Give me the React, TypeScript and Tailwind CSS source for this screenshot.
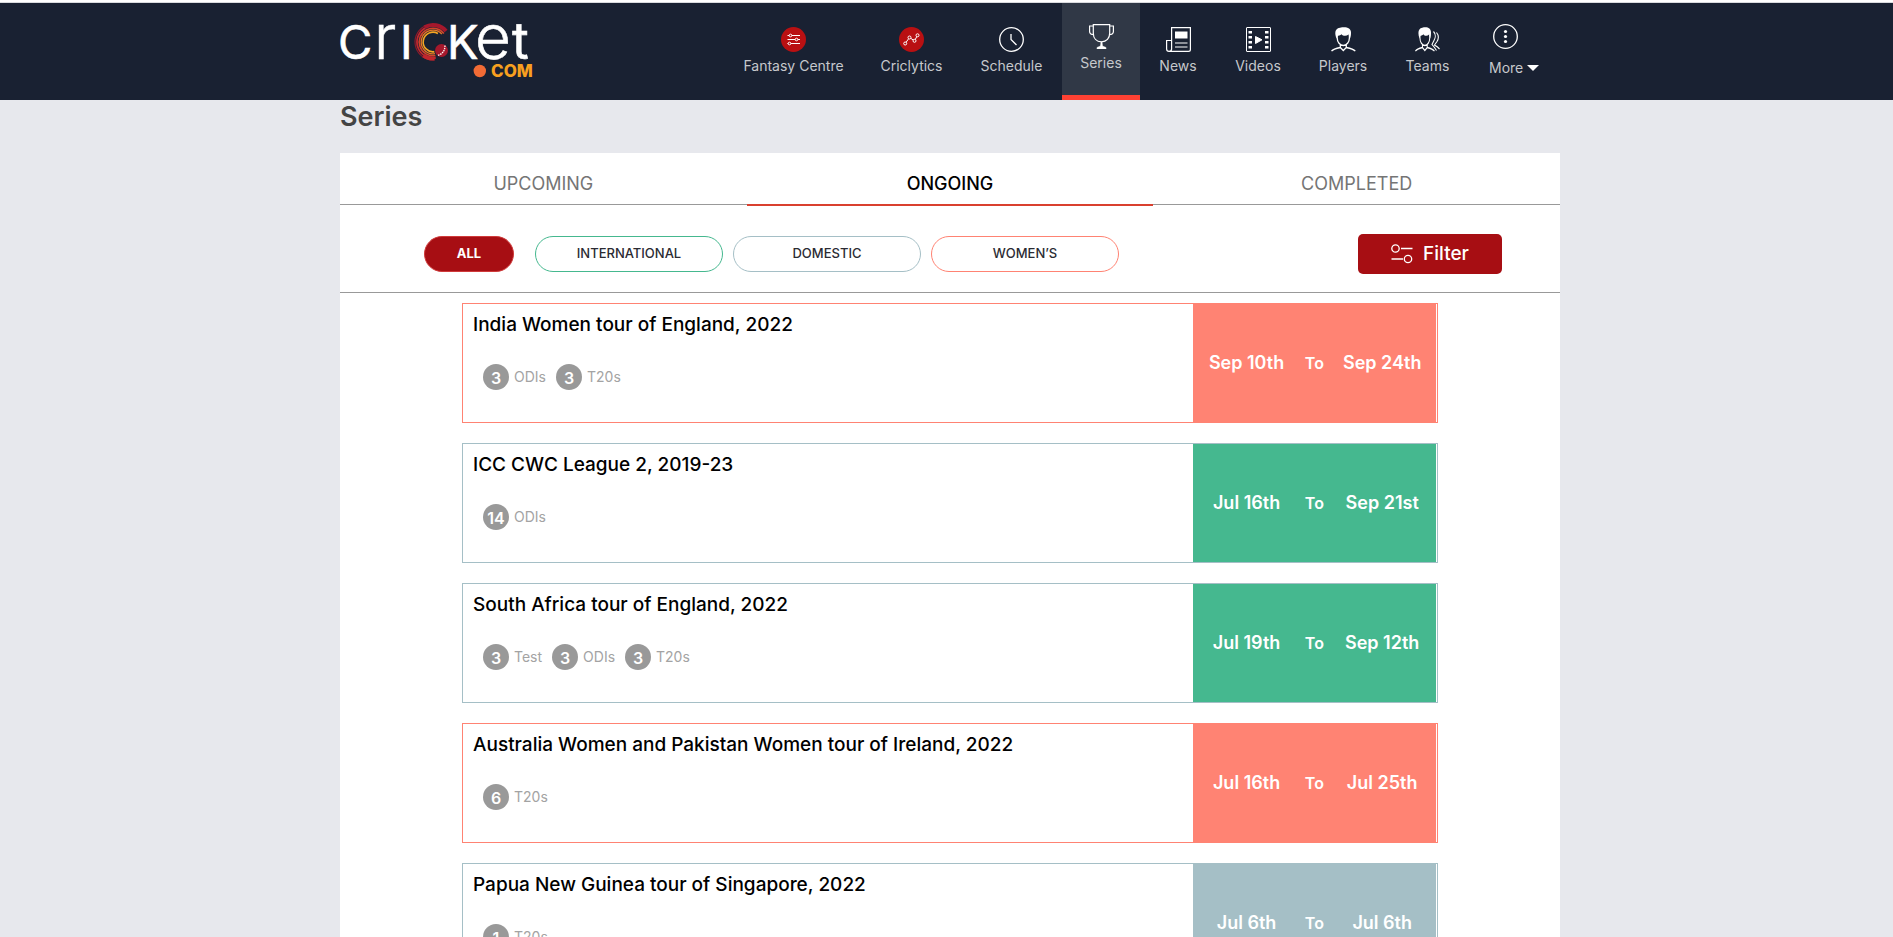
import React from "react";

type IconProps = { className?: string };

function FantasyIcon({ className }: IconProps) {
  return (
    <svg viewBox="0 0 25 25" className={className} aria-hidden="true">
      <circle cx="12.5" cy="12.5" r="12.5" fill="#b91012" />
      <g stroke="#fff" strokeWidth="1" fill="#b91012">
        <path d="M6.5 8.5H19M6.5 12.5H19M6.5 16.5H19" />
        <circle cx="9.5" cy="8.5" r="1.3" />
        <circle cx="15.5" cy="12.5" r="1.3" />
        <circle cx="8.5" cy="16.5" r="1.3" />
      </g>
    </svg>
  );
}

function CriclyticsIcon({ className }: IconProps) {
  return (
    <svg viewBox="0 0 25 25" className={className} aria-hidden="true">
      <circle cx="12.5" cy="12.5" r="12.5" fill="#b91012" />
      <g stroke="#fff" strokeWidth="1" fill="#b91012">
        <path d="M6.2 16.5L10.5 10.5L15.5 13.8L18.5 8.3" fill="none" />
        <circle cx="6.2" cy="16.5" r="1.5" />
        <circle cx="10.5" cy="10.5" r="1.5" />
        <circle cx="15.5" cy="13.8" r="1.5" />
        <circle cx="18.5" cy="8.3" r="1.5" />
      </g>
    </svg>
  );
}

function ClockIcon({ className }: IconProps) {
  return (
    <svg viewBox="0 0 25 25" className={className} fill="none" stroke="#fff" strokeWidth="1.3" aria-hidden="true">
      <circle cx="12.5" cy="12.5" r="11.8" />
      <path d="M12 7V12.5L17.5 18" />
    </svg>
  );
}

function TrophyIcon({ className }: IconProps) {
  return (
    <svg viewBox="0 0 25 25" className={className} fill="none" stroke="#fff" strokeWidth="1.2" aria-hidden="true">
      <path d="M4.3 0.6H20.7V9C20.7 14.5 17.5 17.8 12.5 17.8S4.3 14.5 4.3 9Z" />
      <path d="M4.3 2H0.6V7.5C0.6 9.5 2 10.6 4.7 10.6M20.7 2H24.4V7.5C24.4 9.5 23 10.6 20.3 10.6" />
      <path d="M12 18H13L13.5 22L17 23.5V25H8V23.5L11.5 22Z" fill="#fff" strokeWidth="0.5" />
    </svg>
  );
}

function NewsIcon({ className }: IconProps) {
  return (
    <svg viewBox="0 0 25 25" className={className} fill="none" stroke="#fff" strokeWidth="1.2" aria-hidden="true">
      <path d="M5.6 22V0.6H24.4V22.5Q24.4 24.4 22.5 24.4H3Q0.6 24.4 0.6 22V13.5H5.6V22Q5.6 24.4 3 24.4" />
      <path d="M9 4.5H21.5V11.5H9Z" fill="#fff" stroke="none" />
      <path d="M9 16H21.5M9 20H21.5" />
    </svg>
  );
}

function VideoIcon({ className }: IconProps) {
  return (
    <svg viewBox="0 0 25 25" className={className} aria-hidden="true">
      <rect x="0.5" y="0.5" width="24" height="24" rx="0.5" fill="none" stroke="#fff" />
      <path
        d="M2.5 4H6V6.5H2.5ZM2.5 9H6V11.5H2.5ZM2.5 14H6V16.5H2.5ZM2.5 19H6V21.5H2.5ZM19 4H22.5V6.5H19ZM19 9H22.5V11.5H19ZM19 14H22.5V16.5H19ZM19 19H22.5V21.5H19Z"
        fill="#fff"
      />
      <path d="M9.5 9.5L16 12.8L9.5 16.5Z" fill="#fff" stroke="#fff" strokeLinejoin="round" />
    </svg>
  );
}

function PersonShape() {
  return (
    <>
      <path
        d="M5.5 11.5C3 5 4.5 1.5 9 0.8C15 -0.5 20 1 20 5.5C20 8 19.8 9.5 19 11.5L17.6 7.5C15 9.5 12 9 10.5 7.2C9.5 8.5 7 8.5 6.5 9Z"
        fill="#fff"
      />
      <path
        d="M6.2 8V11C6.2 15 9 18.5 12.3 18.5S18.4 15 18.4 11V8M9.3 17.5V20.5L12.3 23.5L15.3 20.5V17.5M9.3 20.5C5 21.3 2 22 0.5 24.2M15.3 20.5C19.5 21.3 22.5 22 24.3 24.2"
        fill="none"
        stroke="#fff"
        strokeWidth="1.3"
      />
    </>
  );
}

function PlayerIcon({ className }: IconProps) {
  return (
    <svg viewBox="0 0 25 25" className={className} aria-hidden="true">
      <PersonShape />
    </svg>
  );
}

function TeamsIcon({ className }: IconProps) {
  return (
    <svg viewBox="0 0 25 25" className={className} aria-hidden="true">
      <svg x="0" y="0" width="20" height="25" viewBox="0 0 25 25" preserveAspectRatio="none">
        <PersonShape />
      </svg>
      <path
        d="M18.5 4.5C21 7 20.5 11 19 13.5L17 17.5L19.5 20.5L21.5 23.5M21.5 5.5C24 8.5 23.5 12 22 14.5L19.5 18L22.5 20L24.5 22"
        fill="none"
        stroke="#fff"
        strokeWidth="1.1"
      />
    </svg>
  );
}

function MoreIcon({ className }: IconProps) {
  return (
    <svg viewBox="0 0 25 25" className={className} aria-hidden="true">
      <circle cx="12.5" cy="12.5" r="11.8" fill="none" stroke="#fff" strokeWidth="1.3" />
      <g fill="#fff">
        <circle cx="12.5" cy="7.5" r="1.6" />
        <circle cx="12.5" cy="12.5" r="1.6" />
        <circle cx="12.5" cy="17.5" r="1.6" />
      </g>
    </svg>
  );
}

function FilterIcon({ className }: IconProps) {
  return (
    <svg viewBox="0 0 22 20" className={className} fill="none" stroke="#fff" strokeWidth="1.3" aria-hidden="true">
      <circle cx="4.5" cy="4.5" r="3.7" />
      <path d="M10 4.5H21.5M0.5 15H12" />
      <circle cx="17" cy="15" r="3.7" />
    </svg>
  );
}

// An open ring around the ball, drawn counter-clockwise between two angles in degrees.
function ring(r: number, start: number, end: number) {
  const point = (deg: number) => {
    const a = (deg * Math.PI) / 180;
    return `${93 + r * Math.cos(a)} ${22 + r * Math.sin(a)}`;
  };
  return `M${point(start)}A${r} ${r} 0 ${start - end > 180 ? 1 : 0} 0 ${point(end)}`;
}

function Logo() {
  return (
    <svg viewBox="0 0 192 60" className="h-[60px] w-[192px] overflow-visible" role="img" aria-label="cricket.com">
      <g fill="#fff" stroke="#fff" strokeWidth="0.6" fontFamily="Inter, sans-serif">
        <text x="-2" y="39" fontSize="47">
          C
        </text>
        <text x="34" y="39" fontSize="62" fontWeight="300">
          r
        </text>
        <text x="60" y="39" fontSize="47">
          I
        </text>
        <text x="107" y="39" fontSize="47">
          K
        </text>
        <text x="135" y="39" fontSize="62" fontWeight="300">
          e
        </text>
        <text x="172" y="39" fontSize="51">
          t
        </text>
      </g>
      <g fill="none">
        <path d={ring(17, -40, -120)} stroke="#a5182c" strokeWidth="4" />
        <path d={ring(18, -120, -275)} stroke="#8f1a2b" strokeWidth="1.2" />
        <path d={ring(16, -120, -280)} stroke="#c0272d" strokeWidth="1.8" />
        <path d={ring(13.8, -38, -280)} stroke="#d2452b" strokeWidth="1.6" />
        <path d={ring(11.8, -42, -280)} stroke="#ea7a26" strokeWidth="1.3" />
        <path d={ring(9.8, -60, -280)} stroke="#f6a623" strokeWidth="1.6" />
        <path d={ring(16.5, -235, -275)} stroke="#c0272d" strokeWidth="4" />
      </g>
      <circle cx="101.5" cy="30.5" r="7.2" fill="#192132" />
      <circle cx="101.5" cy="30.5" r="6.5" fill="#a5182c" />
      <path d="M105 25.5C105 30 103 34 97.5 35.5" fill="none" stroke="#fff" strokeWidth="1.3" strokeDasharray="1.5 0.8" />
      <circle cx="139.8" cy="51" r="6.2" fill="#f26b35" />
      <text x="151" y="57" fontSize="17" fontWeight="800" fill="#f8a01f" fontFamily="Inter, sans-serif">
        COM
      </text>
    </svg>
  );
}

const navItems = [
  { label: "Fantasy Centre", Icon: FantasyIcon, width: "w-[137px]" },
  { label: "Criclytics", Icon: CriclyticsIcon, width: "w-[99px]" },
  { label: "Schedule", Icon: ClockIcon, width: "w-[101px]" },
  { label: "Series", Icon: TrophyIcon, width: "w-[78px]", active: true },
  { label: "News", Icon: NewsIcon, width: "w-[76px]" },
  { label: "Videos", Icon: VideoIcon, width: "w-[84px]" },
  { label: "Players", Icon: PlayerIcon, width: "w-[86px]" },
  { label: "Teams", Icon: TeamsIcon, width: "w-[83px]" },
];

const chips = [
  { label: "INTERNATIONAL", border: "border-[#45b88f]" },
  { label: "DOMESTIC", border: "border-[#a5bfc6]" },
  { label: "WOMEN’S", border: "border-[#ff8373]" },
];

const tones = {
  women: { border: "border-[#ff8373]", fill: "bg-[#ff8373]" },
  international: { border: "border-[#a5bfc6]", fill: "bg-[#45b88f]" },
  domestic: { border: "border-[#a5bfc6]", fill: "bg-[#a5bfc6]" },
};

type Series = {
  title: string;
  tone: keyof typeof tones;
  from: string;
  to: string;
  matches: [number, string][];
};

const seriesList: Series[] = [
  { title: "India Women tour of England, 2022", tone: "women", from: "Sep 10th", to: "Sep 24th", matches: [[3, "ODIs"], [3, "T20s"]] },
  { title: "ICC CWC League 2, 2019-23", tone: "international", from: "Jul 16th", to: "Sep 21st", matches: [[14, "ODIs"]] },
  { title: "South Africa tour of England, 2022", tone: "international", from: "Jul 19th", to: "Sep 12th", matches: [[3, "Test"], [3, "ODIs"], [3, "T20s"]] },
  { title: "Australia Women and Pakistan Women tour of Ireland, 2022", tone: "women", from: "Jul 16th", to: "Jul 25th", matches: [[6, "T20s"]] },
  { title: "Papua New Guinea tour of Singapore, 2022", tone: "domestic", from: "Jul 6th", to: "Jul 6th", matches: [[1, "T20s"]] },
];

function Header() {
  return (
    <header className="border-t border-[#d9dade] bg-[#192132] pl-[7px]">
      <div className="mx-auto flex h-[97px] max-w-[1220px] justify-between">
        <a href="#home" className="pt-[17px]">
          <Logo />
        </a>
        <nav className="flex text-sm leading-4 text-[#c6c8cc]">
          {navItems.map(({ label, Icon, width, active }) => (
            <a
              key={label}
              href="#nav"
              className={`flex flex-col items-center gap-[6px] ${width} ${
                active ? "border-b-[5px] border-[#ff4133] bg-[#303846] pt-[21px]" : "pt-6"
              }`}
            >
              <Icon className="size-[25px]" />
              <span className="whitespace-nowrap">{label}</span>
            </a>
          ))}
          <button type="button" className="flex w-[91px] flex-col items-start gap-[11px] pt-[21px] pl-5">
            <MoreIcon className="ml-1 size-[25px]" />
            <span className="flex items-center gap-1">
              More
              <svg viewBox="0 0 12 6" className="h-[6px] w-3" aria-hidden="true">
                <path d="M0 0H12L6 6Z" fill="#fff" />
              </svg>
            </span>
          </button>
        </nav>
      </div>
    </header>
  );
}

function SeriesCard({ series }: { series: Series }) {
  const tone = tones[series.tone];
  return (
    <article className={`flex h-[120px] border pr-px ${tone.border}`}>
      <div className="flex-1 px-[10px] pt-[9px]">
        <h2 className="text-[19px] leading-6 font-medium text-black">{series.title}</h2>
        <ul className="mt-[27px] flex gap-[10px] pl-[10px]">
          {series.matches.map(([count, format]) => (
            <li key={format} className="flex items-center gap-[5px]">
              <span className="flex size-[26px] items-center justify-center rounded-full bg-[#999] pt-px text-base font-semibold text-white">
                {count}
              </span>
              <span className="text-sm text-[#a3a3a3]">{format}</span>
            </li>
          ))}
        </ul>
      </div>
      <div className={`flex w-1/4 items-center px-1 text-center text-lg font-semibold text-white ${tone.fill}`}>
        <span className="flex-1 whitespace-nowrap">{series.from}</span>
        <span className="w-9 text-base">To</span>
        <span className="flex-1 whitespace-nowrap">{series.to}</span>
      </div>
    </article>
  );
}

export default function App() {
  return (
    <div className="h-screen overflow-hidden bg-[#e7e8ed] font-['Inter',sans-serif]">
      <div className="h-[2px] bg-white" />
      <Header />
      <main className="pl-[7px]">
        <div className="mx-auto max-w-[1220px]">
          <h1 className="pt-px text-[27px] leading-8 font-semibold text-[#444]">Series</h1>
          <section className="mt-5 bg-white">
            <div role="tablist" className="grid h-[53px] grid-cols-3 text-lg">
              <button type="button" role="tab" aria-selected="false" className="h-[52px] border-b border-[#999] pt-[10px] text-[#757575]">
                UPCOMING
              </button>
              <button type="button" role="tab" aria-selected="true" className="border-b-2 border-[#d9402f] pt-[10px] font-medium text-black">
                ONGOING
              </button>
              <button type="button" role="tab" aria-selected="false" className="h-[52px] border-b border-[#999] pt-[10px] text-[#757575]">
                COMPLETED
              </button>
            </div>
            <div className="flex h-[87px] items-center justify-between border-b border-[#999] pt-[10px] pr-[58px] pl-[84px]">
              <div className="flex items-center gap-[10px] text-[13px] font-medium text-[#2b2b33]">
                <button type="button" className="mr-[11px] h-9 w-[90px] rounded-full border border-[#d03a3a] bg-[#a70e13] font-bold text-white">
                  ALL
                </button>
                {chips.map(({ label, border }) => (
                  <button key={label} type="button" className={`h-9 w-[188px] rounded-full border ${border}`}>
                    {label}
                  </button>
                ))}
              </div>
              <button
                type="button"
                className="flex h-10 w-36 items-center justify-center gap-[10px] rounded-[5px] bg-[#a70e13] text-[19px] font-medium text-white"
              >
                <FilterIcon className="h-5 w-[22px]" />
                Filter
              </button>
            </div>
            <div className="mx-auto flex w-4/5 flex-col gap-5 pt-[10px] pb-5">
              {seriesList.map((series) => (
                <SeriesCard key={series.title} series={series} />
              ))}
            </div>
          </section>
        </div>
      </main>
    </div>
  );
}
